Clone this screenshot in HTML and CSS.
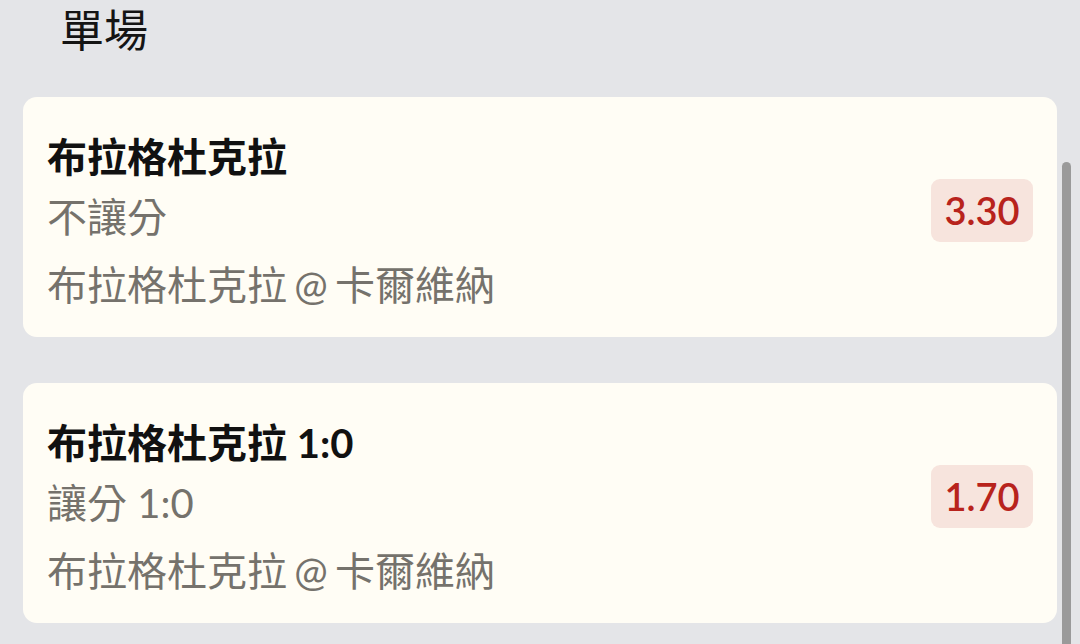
FILE: index.html
```html
<!DOCTYPE html>
<html>
<head>
  <title>單場</title>
  <link rel="stylesheet" href="styles.css">
</head>
<body>
  <h2 class="section-title">單場</h2>

  <div class="bet-list">
    <div class="bet-card">
      <div class="bet-info">
        <div class="bet-pick">布拉格杜克拉</div>
        <div class="bet-market">不讓分</div>
        <div class="bet-match">布拉格杜克拉 @ 卡爾維納</div>
      </div>
      <div class="bet-odds">3.30</div>
    </div>

    <div class="bet-card">
      <div class="bet-info">
        <div class="bet-pick">布拉格杜克拉 1:0</div>
        <div class="bet-market">讓分 1:0</div>
        <div class="bet-match">布拉格杜克拉 @ 卡爾維納</div>
      </div>
      <div class="bet-odds">1.70</div>
    </div>
  </div>

  <div class="scroll-thumb"></div>
</body>
</html>
```

FILE: styles.css
```css
body {
  margin: 0;
  background: #e4e5e8;
  font-family: Lato, "Noto Sans CJK TC", sans-serif;
  overflow: hidden;
}

.section-title {
  margin: 0;
  padding: 0 0 0 60px;
  height: 60px;
  line-height: 60px;
  font-size: 44px;
  font-weight: normal;
  color: #141414;
}

.bet-list {
  display: flex;
  flex-direction: column;
  gap: 46px;
  padding: 37px 23px 0 23px;
}

.bet-card {
  display: flex;
  align-items: center;
  justify-content: space-between;
  height: 240px;
  box-sizing: border-box;
  padding: 27px 24px 20px 24px;
  background: #fffdf5;
  border-radius: 14px;
}

.bet-info {
  font-size: 40px;
  line-height: 60px;
}

.bet-pick {
  font-weight: bold;
  color: #111;
}

.bet-market {
  color: #75726c;
  margin-bottom: 8px;
}

.bet-match {
  color: #75726c;
  word-spacing: -3px;
}

.bet-odds {
  width: 102px;
  height: 63px;
  line-height: 63px;
  text-align: center;
  margin-bottom: 20px;
  background: #f7e4dd;
  border-radius: 9px;
  color: #b8231c;
  font-size: 38px;
  font-weight: 600;
}

.scroll-thumb {
  position: absolute;
  left: 1062px;
  top: 162px;
  width: 9px;
  height: 482px;
  border-radius: 5px 5px 0 0;
  background: #9a9a9a;
}
```
